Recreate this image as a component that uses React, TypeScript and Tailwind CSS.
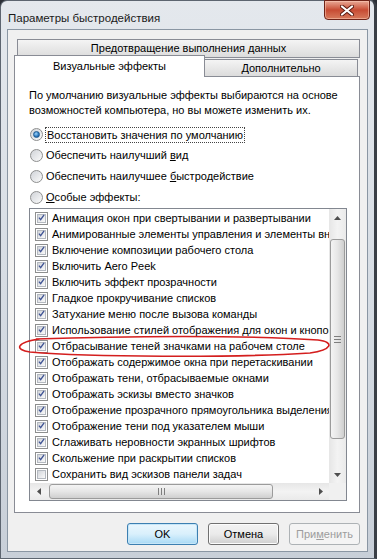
import React from "react";

const effects: [string, boolean][] = [
  ["Анимация окон при свертывании и развертывании", true],
  ["Анимированные элементы управления и элементы внутри окна", true],
  ["Включение композиции рабочего стола", true],
  ["Включить Aero Peek", true],
  ["Включить эффект прозрачности", true],
  ["Гладкое прокручивание списков", true],
  ["Затухание меню после вызова команды", true],
  ["Использование стилей отображения для окон и кнопок", true],
  ["Отбрасывание теней значками на рабочем столе", true],
  ["Отображать содержимое окна при перетаскивании", true],
  ["Отображать тени, отбрасываемые окнами", true],
  ["Отображать эскизы вместо значков", true],
  ["Отображение прозрачного прямоугольника выделения", true],
  ["Отображение тени под указателем мыши", true],
  ["Сглаживать неровности экранных шрифтов", true],
  ["Скольжение при раскрытии списков", true],
  ["Сохранить вид эскизов панели задач", false],
];

function Check({ on }: { on: boolean }) {
  return (
    <span className="w-[13px] h-[13px] border border-[#8e8f8f] bg-white p-[1px] shrink-0">
      <span className="w-full h-full border border-[#b4b9c0] bg-gradient-to-br from-[#d2d5da] to-[#fafafa] flex items-center justify-center">
        {on && (
          <svg width="9" height="9" viewBox="0 0 9 9" className="-mt-[1px]">
            <path d="M1.2 4.6 L3.4 7.2 L7.8 1" fill="none" stroke="#3f5394" strokeWidth="1.7" />
          </svg>
        )}
      </span>
    </span>
  );
}

function Radio({ on }: { on?: boolean }) {
  return (
    <span className="w-[13px] h-[13px] rounded-full border border-[#8e8f8f] bg-gradient-to-br from-[#d0d3d8] to-[#fbfbfb] flex items-center justify-center shrink-0">
      {on && (
        <span className="w-[7px] h-[7px] rounded-full bg-[radial-gradient(circle_at_40%_35%,#9fd5fb,#2a77bd_60%,#174a7c)] border border-[#1d5a91]" />
      )}
    </span>
  );
}

function Arrow({ dir }: { dir: "up" | "down" | "left" | "right" }) {
  const d = {
    up: "M0 4 L3.5 0 L7 4 Z",
    down: "M0 0 L7 0 L3.5 4 Z",
    left: "M4 0 L4 7 L0 3.5 Z",
    right: "M0 0 L4 3.5 L0 7 Z",
  }[dir];
  const w = dir === "up" || dir === "down" ? 7 : 4;
  const h = dir === "up" || dir === "down" ? 4 : 7;
  return (
    <svg width={w} height={h} viewBox={`0 0 ${w} ${h}`}>
      <path d={d} fill="#4f4f4f" />
    </svg>
  );
}

function Button({ children, primary, disabled }: { children: React.ReactNode; primary?: boolean; disabled?: boolean }) {
  return (
    <div
      className={
        "w-[71px] h-[22px] rounded-[3px] border flex items-center justify-center " +
        (primary
          ? "border-[#3c7fb1] bg-gradient-to-b from-[#eaf6fd] via-[#d9f0fc] to-[#a7d9f5] text-black shadow-[inset_0_0_0_1px_#c6e6f8]"
          : disabled
          ? "border-[#adb2b5] bg-[#f4f4f4] text-[#9d9d9d]"
          : "border-[#707070] bg-gradient-to-b from-[#f2f2f2] via-[#ebebeb] to-[#cfcfcf] text-black shadow-[inset_0_0_0_1px_#fcfcfc]")
      }
    >
      {children}
    </div>
  );
}

export default function App() {
  return (
    <div className="relative w-[377px] h-[559px] bg-[#2b2f36] font-['Liberation_Sans',Arial,sans-serif] text-[11px] text-black overflow-hidden">
      <div className="w-full h-full flex flex-col rounded-t-[7px] border border-[#5d6570] bg-gradient-to-b from-[#e4e8ed] via-[#d7dde4] to-[#c8cfd8] border-r-[3px] border-r-[#3a3f46]">
        {/* title bar */}
        <div className="h-[28px] flex items-start justify-between shrink-0">
          <div className="pl-[7px] pt-[9px] text-[11.5px] text-[#1a1a1a]">Параметры быстродействия</div>
          <div className="mr-[4px] -mt-px w-[46px] h-[20px] rounded-b-[4px] border border-[#6e2318] bg-gradient-to-b from-[#e8a896] via-[#c74b33] to-[#d7795c] flex items-center justify-center shadow-[inset_0_0_0_1px_rgba(255,210,190,0.5)]">
            <svg width="14" height="11" viewBox="0 0 14 11">
              <path d="M2 1.5 L12 9.5 M12 1.5 L2 9.5" stroke="#5a1a10" strokeWidth="4" strokeLinecap="round" />
              <path d="M2 1.5 L12 9.5 M12 1.5 L2 9.5" stroke="#ffffff" strokeWidth="2.2" strokeLinecap="round" />
            </svg>
          </div>
        </div>

        {/* client area */}
        <div className="mx-[6px] mb-[6px] flex-1 flex flex-col border border-[#8a96a3] bg-[#f0f0f0] pl-[6px] pr-[7px] pt-[9px]">
          {/* tabs */}
          <div className="ml-[3px] h-[19px] border border-[#898c95] bg-gradient-to-b from-[#f4f4f4] to-[#dcdcdc] flex items-start justify-center pt-[2px] leading-[13px]">
            Предотвращение выполнения данных
          </div>
          <div className="-mt-[3px] flex items-end h-[21px]">
            <div className="relative z-10 w-[191px] h-[22px] -mb-px border border-b-0 border-[#898c95] bg-white flex justify-center pt-[4px] leading-[13px]">
              Визуальные эффекты
            </div>
            <div className="flex-1 h-[17px] mr-[2px] border border-l-0 border-b-0 border-[#898c95] bg-gradient-to-b from-[#f4f4f4] to-[#dcdcdc] flex justify-center pt-[2px] leading-[13px]">
              Дополнительно
            </div>
          </div>

          {/* panel */}
          <div className="h-[437px] border border-[#898c95] bg-white pl-[14px] pr-[12px] pt-[11px] flex flex-col">
            <p className="leading-[15px] whitespace-nowrap">
              По умолчанию визуальные эффекты выбираются на основе
              <br />
              возможностей компьютера, но вы можете изменить их.
            </p>
            <div className="mt-[6px] flex flex-col">
              <div className="h-[21px] flex items-center gap-[2px] pl-px">
                <Radio on />
                <span className="border border-dotted border-[#444] px-px leading-[14px]">
                  Восстановить значения по умолчанию
                </span>
              </div>
              <div className="h-[21px] flex items-center gap-[3px] pl-px">
                <Radio />
                <span>
                  Обеспечить наилучший <u>в</u>ид
                </span>
              </div>
              <div className="h-[21px] flex items-center gap-[3px] pl-px">
                <Radio />
                <span>
                  Обеспечить наилучшее <u>б</u>ыстродействие
                </span>
              </div>
              <div className="h-[21px] flex items-center gap-[3px] pl-px">
                <Radio />
                <span>
                  <u>О</u>собые эффекты:
                </span>
              </div>
            </div>

            {/* list box */}
            <div className="h-[293px] shrink-0 border border-[#828790] flex flex-col">
              <div className="flex h-[274px]">
                <div className="flex-1 overflow-hidden pt-px">
                  {effects.map(([label, on]) => (
                    <div key={label} className="h-[16px] flex items-center gap-[4px] pl-[5px] whitespace-nowrap">
                      <Check on={on} />
                      <span>{label}</span>
                    </div>
                  ))}
                </div>
                <div className="w-[17px] bg-gradient-to-r from-[#e6e6e6] via-[#f3f3f3] to-[#eaeaea] flex flex-col items-center">
                  <div className="h-[17px] flex items-center justify-center">
                    <Arrow dir="up" />
                  </div>
                  <div className="mt-[13px] w-[15px] h-[200px] rounded-[3px] border border-[#9b9b9b] bg-gradient-to-r from-[#f4f4f4] via-[#e6e6e6] to-[#cfcfcf] flex flex-col items-center justify-center gap-[2px]">
                    <span className="w-[7px] h-px bg-[#7e7e7e]" />
                    <span className="w-[7px] h-px bg-[#7e7e7e]" />
                    <span className="w-[7px] h-px bg-[#7e7e7e]" />
                  </div>
                  <div className="flex-1" />
                  <div className="h-[17px] flex items-center justify-center">
                    <Arrow dir="down" />
                  </div>
                </div>
              </div>
              <div className="flex h-[17px]">
                <div className="flex-1 bg-gradient-to-b from-[#e6e6e6] via-[#f3f3f3] to-[#eaeaea] flex items-center">
                  <div className="w-[17px] flex justify-center">
                    <Arrow dir="left" />
                  </div>
                  <div className="ml-[2px] w-[224px] h-[15px] rounded-[3px] border border-[#9b9b9b] bg-gradient-to-b from-[#f4f4f4] via-[#e6e6e6] to-[#cfcfcf] flex items-center justify-center gap-[2px]">
                    <span className="w-px h-[7px] bg-[#7e7e7e]" />
                    <span className="w-px h-[7px] bg-[#7e7e7e]" />
                    <span className="w-px h-[7px] bg-[#7e7e7e]" />
                  </div>
                  <div className="flex-1" />
                  <div className="w-[17px] flex justify-center">
                    <Arrow dir="right" />
                  </div>
                </div>
                <div className="w-[17px] bg-[#f0f0f0]" />
              </div>
            </div>
          </div>

          {/* buttons */}
          <div className="mt-[10px] flex justify-end gap-[10px]">
            <Button primary>OK</Button>
            <Button>Отмена</Button>
            <Button disabled>
              При<u>м</u>енить
            </Button>
          </div>
        </div>
      </div>

      {/* red annotation ellipse */}
      <svg className="absolute left-0 top-0 pointer-events-none" width="377" height="559" viewBox="0 0 377 559">
        <path
          d="M36 339 C 120 336, 250 335, 318 340 C 335 342, 332 350, 310 353 C 230 358, 90 357, 30 352 C 14 350, 16 342, 40 339"
          fill="none"
          stroke="#d41e1e"
          strokeWidth="1.6"
        />
      </svg>
    </div>
  );
}
